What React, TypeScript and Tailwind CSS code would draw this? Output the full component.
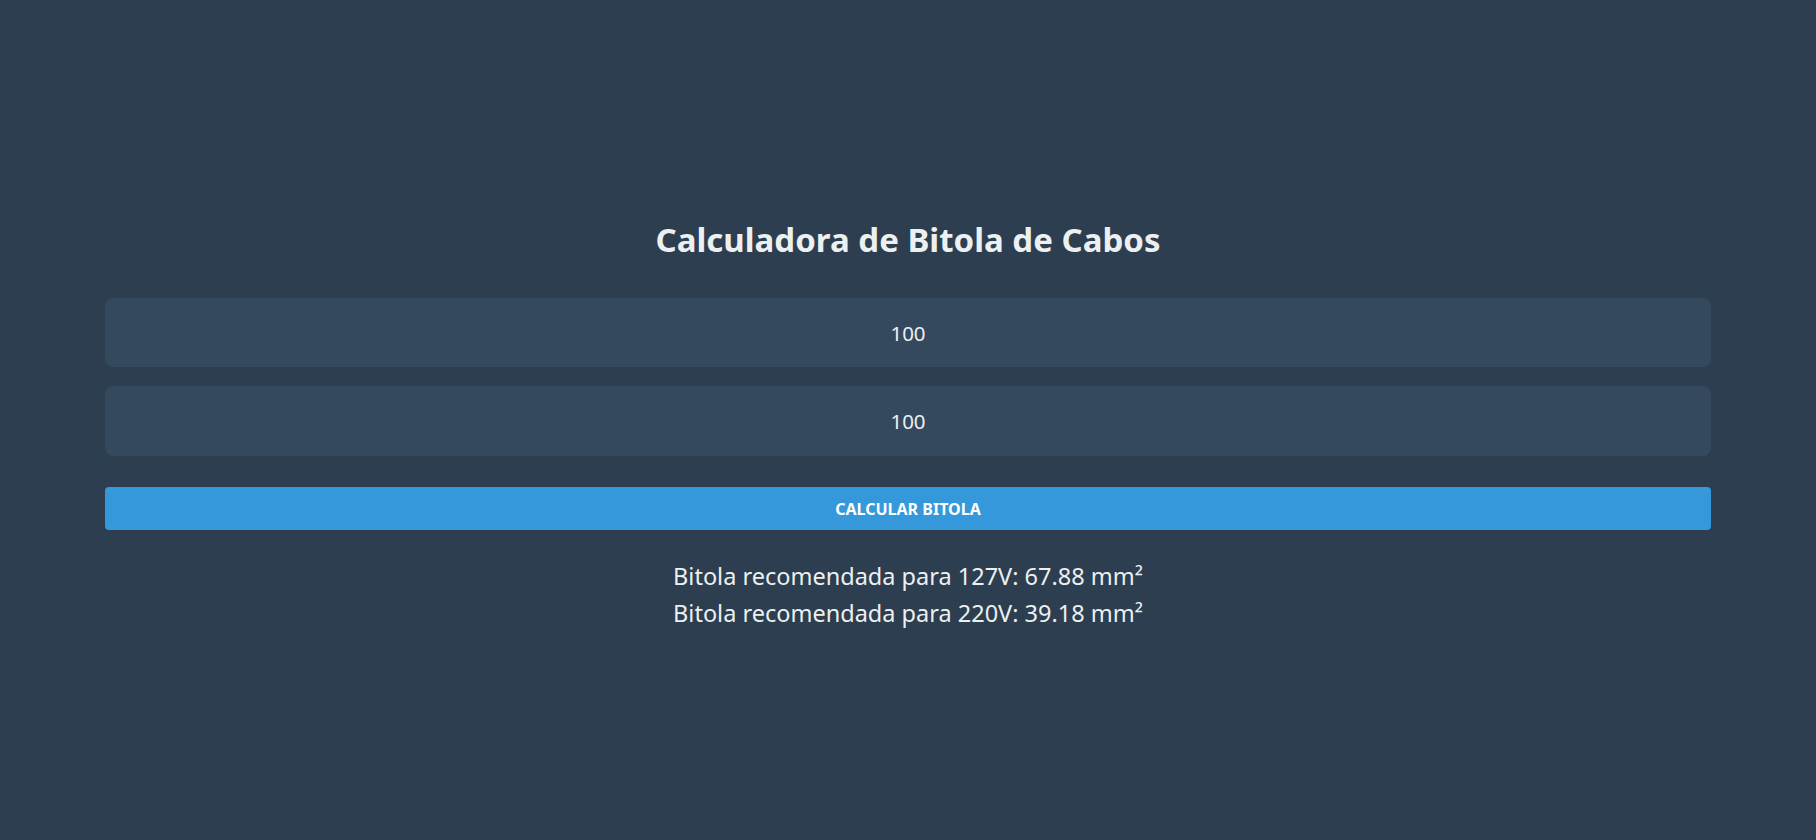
import React, { useState } from 'react';

export default function App() {
    const [comprimento, setComprimento] = useState('100');
    const [corrente, setCorrente] = useState('100');

    return (
        <div className="min-h-screen bg-[#2c3e50] flex items-center justify-center pt-[12px] font-['Noto_Sans',sans-serif] text-[#ecf0f1]">
            <div className="w-[1606px] flex flex-col items-stretch text-center">

                <h1 className="text-[33px] leading-[40px] font-bold mb-[38px]">
                    Calculadora de Bitola de Cabos
                </h1>

                <input
                    type="text"
                    inputMode="numeric"
                    value={comprimento}
                    onChange={(e) => setComprimento(e.target.value)}
                    className="h-[69px] bg-[#34495e] rounded-lg text-center text-[20.5px] text-[#ecf0f1] outline-none"
                />
                <input
                    type="text"
                    inputMode="numeric"
                    value={corrente}
                    onChange={(e) => setCorrente(e.target.value)}
                    className="h-[70px] mt-[19px] bg-[#34495e] rounded-lg text-center text-[20.5px] text-[#ecf0f1] outline-none"
                />

                <button className="h-[43px] mt-[31px] bg-[#3498db] rounded-sm text-[16px] font-bold uppercase text-white">
                    Calcular Bitola
                </button>

                <div className="mt-[28px] text-[23.5px] leading-[37px]">
                    <p>Bitola recomendada para 127V: 67.88 mm²</p>
                    <p>Bitola recomendada para 220V: 39.18 mm²</p>
                </div>

            </div>
        </div>
    );
}
